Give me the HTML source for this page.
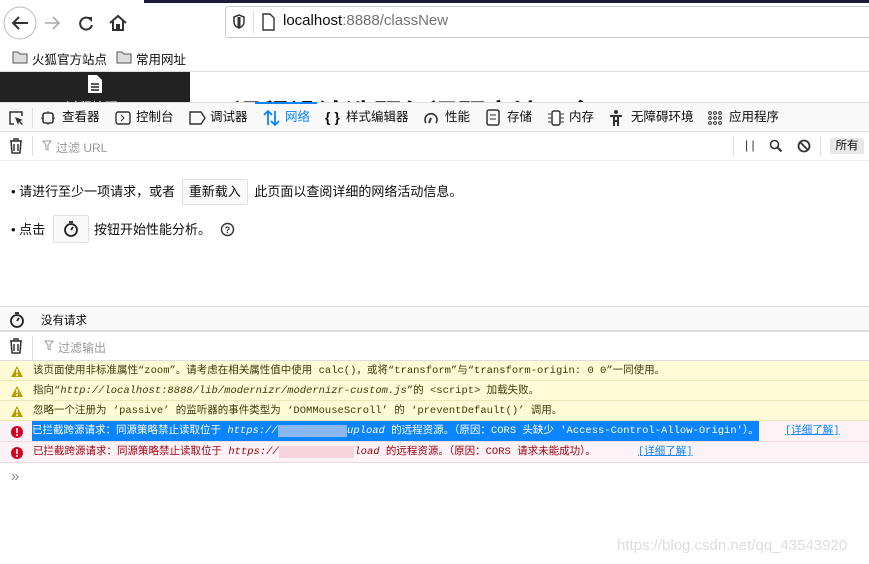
<!DOCTYPE html>
<html><head><meta charset="utf-8"><style>
*{margin:0;padding:0;box-sizing:border-box}
body{width:869px;height:564px;overflow:hidden;background:#fff;font-family:"Liberation Sans","Noto Sans CJK SC",sans-serif;font-size:12px;color:#0c0c0d;position:relative}
.abs{position:absolute}
.mono{font-family:"Liberation Mono","Noto Sans CJK SC",monospace;font-size:10.5px}
.row{position:absolute;left:0;width:869px;height:20px;line-height:20px;border-bottom:1px solid #ece6b8}
.warn{background:#fffbd6;color:#3b3b0a}
.err{background:#fdf2f5;color:#a4000f;border-bottom-color:#f2dae1}
.ico{position:absolute;left:11px;top:5px}
.txt{position:absolute;left:33px;top:0;white-space:nowrap}
.tab{position:absolute;top:0;height:29px;line-height:29px;font-size:12.5px;white-space:nowrap}
</style></head><body>
<div class="abs" style="left:144px;top:0;width:725px;height:3px;background:#1c1b3a"></div>
<svg class="abs" style="left:3px;top:6px" width="34" height="34"><circle cx="17" cy="17" r="16" fill="#fff" stroke="#bbb"/><path d="M25 17H10M16 11l-6 6 6 6" stroke="#333" stroke-width="2" fill="none"/></svg>
<svg class="abs" style="left:42px;top:13px" width="20" height="20"><path d="M17 10H3M11 4l6 6-6 6" stroke="#aaa" stroke-width="1.6" fill="none"/></svg>
<svg class="abs" style="left:76px;top:13px" width="20" height="20"><path d="M15 7A6 6 0 1 0 16 12" stroke="#333" stroke-width="2" fill="none"/><path d="M11 4h5v5z" fill="#333"/></svg>
<svg class="abs" style="left:108px;top:13px" width="20" height="20"><path d="M2 10L10 3l8 7M5 8v9h4v-5h2v5h4V8" stroke="#333" stroke-width="2" fill="none"/></svg>
<div class="abs" style="left:225px;top:6px;width:660px;height:32px;border:1px solid #ccc;border-radius:3px;background:#fff"></div>
<svg class="abs" style="left:232px;top:14px" width="14" height="16"><path d="M7 1L2 3v5c0 3 2 5 5 6 3-1 5-3 5-6V3z" stroke="#333" stroke-width="1.5" fill="none"/><path d="M7 3v10" stroke="#333" stroke-width="3"/></svg>
<div class="abs" style="left:253px;top:10px;width:1px;height:24px;background:#ddd"></div>
<svg class="abs" style="left:261px;top:13px" width="14" height="18"><path d="M2 1h7l4 4v12H2z" stroke="#333" stroke-width="1.4" fill="none"/></svg>
<div class="abs" style="left:283px;top:12px;font-size:15px;color:#0c0c0d">localhost<span style="color:#737373">:8888/classNew</span></div>
<svg class="abs" style="left:12px;top:51px" width="16" height="13"><path d="M1 1h5l2 2h7v9H1z" fill="#ddd" stroke="#555"/></svg>
<div class="abs" style="left:32px;top:49px;font-size:12.5px">火狐官方站点</div>
<svg class="abs" style="left:116px;top:51px" width="16" height="13"><path d="M1 1h5l2 2h7v9H1z" fill="#ddd" stroke="#555"/></svg>
<div class="abs" style="left:136px;top:49px;font-size:12.5px">常用网址</div>
<div class="abs" style="left:0;top:71px;width:869px;height:1px;background:#ddd"></div>
<div class="abs" style="left:0;top:72px;width:190px;height:30px;background:#222;overflow:hidden">
<svg class="abs" style="left:87px;top:2px" width="16" height="20"><path d="M1 1h9l5 5v13H1z" fill="#fff"/><path d="M4 10h8M4 13h8M4 16h8" stroke="#222" stroke-width="1.5"/></svg>
<div class="abs" style="left:66px;top:25px;color:#fff;font-size:13px">过程管理</div></div>
<div class="abs" style="left:233px;top:72px;width:380px;height:30px;overflow:hidden"><div style="position:absolute;top:21px;font-size:28px;font-weight:bold;white-space:nowrap">课程设计选题与问题交流平台</div></div>
<div class="abs" style="left:0;top:102px;width:869px;height:30px;background:#f9f9fa;border-top:1px solid #ddd;border-bottom:1px solid #ddd"></div>
<div class="abs" style="left:255px;top:102px;width:62px;height:2px;background:#0a84ff"></div>
<div class="abs" style="top:103px;left:0;width:869px;height:29px">
<svg class="abs" style="left:8px;top:7px" width="16" height="16"><path d="M6 14H2V2h12v4" stroke="#333" stroke-width="1.5" fill="none"/><path d="M7 7l8 3-3 1 3 3-1 1-3-3-1 3z" fill="#333"/></svg>
<div class="abs" style="left:32px;top:5px;width:1px;height:20px;background:#ddd"></div>
<svg class="abs" style="left:41px;top:8px" width="14" height="14"><rect x="2" y="2" width="10" height="10" rx="2" stroke="#333" stroke-width="1.6" fill="none"/><path d="M7 0v2M7 12v2M0 7h2M12 7h2" stroke="#333"/></svg>
<div class="tab" style="left:62px">查看器</div>
<svg class="abs" style="left:115px;top:8px" width="16" height="14"><rect x="1" y="1" width="14" height="12" rx="2" stroke="#333" stroke-width="1.4" fill="none"/><path d="M6 4l3 3-3 3" stroke="#333" fill="none"/></svg>
<div class="tab" style="left:136px">控制台</div>
<svg class="abs" style="left:189px;top:8px" width="17" height="14"><path d="M1 1h11l4 6-4 6H1z" stroke="#333" stroke-width="1.4" fill="none"/></svg>
<div class="tab" style="left:210px">调试器</div>
<svg class="abs" style="left:263px;top:6px" width="17" height="18"><path d="M5 16V2M1 6l4-4 4 4M12 2v14M8 12l4 4 4-4" stroke="#0a84ff" stroke-width="1.8" fill="none"/></svg>
<div class="tab" style="left:285px;color:#0a84ff">网络</div>
<div class="tab" style="left:325px;font-weight:bold;font-size:14px">{ }</div>
<div class="tab" style="left:346px">样式编辑器</div>
<svg class="abs" style="left:423px;top:7px" width="16" height="16"><path d="M3 13A6 6 0 1 1 13 13" stroke="#333" stroke-width="1.6" fill="none"/><path d="M8 8l-2 5" stroke="#333" stroke-width="2"/></svg>
<div class="tab" style="left:445px">性能</div>
<svg class="abs" style="left:486px;top:6px" width="14" height="17"><rect x="1" y="1" width="12" height="15" rx="2" stroke="#333" stroke-width="1.5" fill="none"/><path d="M4 6h6M4 10h6" stroke="#333"/></svg>
<div class="tab" style="left:507px">存储</div>
<svg class="abs" style="left:548px;top:7px" width="16" height="16"><rect x="4" y="1" width="8" height="14" rx="2" stroke="#333" stroke-width="1.5" fill="none"/><path d="M0 4h3M0 8h3M0 12h3M13 4h3M13 8h3M13 12h3" stroke="#333"/></svg>
<div class="tab" style="left:569px">内存</div>
<svg class="abs" style="left:609px;top:6px" width="14" height="18"><circle cx="7" cy="3" r="2" fill="#333"/><path d="M1 7h12M5 7v10M9 7v10M5 12h4" stroke="#333" stroke-width="2"/></svg>
<div class="tab" style="left:631px">无障碍环境</div>
<svg class="abs" style="left:708px;top:8px" width="14" height="14"><g fill="none" stroke="#333"><circle cx="2" cy="2" r="1.4"/><circle cx="7" cy="2" r="1.4"/><circle cx="12" cy="2" r="1.4"/><circle cx="2" cy="7" r="1.4"/><circle cx="7" cy="7" r="1.4"/><circle cx="12" cy="7" r="1.4"/><circle cx="2" cy="12" r="1.4"/><circle cx="7" cy="12" r="1.4"/><circle cx="12" cy="12" r="1.4"/></g></svg>
<div class="tab" style="left:729px">应用程序</div>
</div>
<svg class="abs" style="left:9px;top:138px" width="14" height="16"><path d="M1 3h12M5 3V1h4v2M2 3l1 12h8l1-12M5 6v7M9 6v7" stroke="#333" stroke-width="1.5" fill="none"/></svg>
<div class="abs" style="left:32px;top:136px;width:1px;height:20px;background:#ddd"></div>
<svg class="abs" style="left:42px;top:140px" width="10" height="11"><path d="M1 1h8L6 5v5L4 9V5z" stroke="#999" fill="none"/></svg>
<div class="abs" style="left:56px;top:139px;color:#999;font-size:12px">过滤 URL</div>
<div class="abs" style="left:733px;top:136px;width:1px;height:20px;background:#ddd"></div>
<div class="abs" style="left:745px;top:138px;font-size:12px;color:#333">| |</div>
<svg class="abs" style="left:769px;top:139px" width="14" height="14"><circle cx="5.5" cy="5.5" r="4" stroke="#333" stroke-width="1.6" fill="none"/><path d="M8.5 8.5l4 4" stroke="#333" stroke-width="2"/></svg>
<svg class="abs" style="left:797px;top:139px" width="14" height="14"><circle cx="7" cy="7" r="5.5" stroke="#333" stroke-width="1.8" fill="none"/><path d="M3 3l8 8" stroke="#333" stroke-width="1.8"/></svg>
<div class="abs" style="left:820px;top:136px;width:1px;height:20px;background:#ddd"></div>
<div class="abs" style="left:830px;top:138px;width:34px;height:16px;background:#e8e8e9;border-radius:2px;font-size:11.5px;text-align:center;line-height:16px">所有</div>
<div class="abs" style="left:0;top:160px;width:869px;height:1px;background:#eee"></div>
<div class="abs" style="left:11px;top:179px;font-size:13px;white-space:nowrap;line-height:18px">• 请进行至少一项请求，或者 <span style="display:inline-block;margin:0 3px;padding:3px 6px;background:#f9f9fa;border:1px solid #e0e0e1;border-radius:2px">重新载入</span> 此页面以查阅详细的网络活动信息。</div>
<div class="abs" style="left:11px;top:221px;font-size:13px;white-space:nowrap;line-height:18px">• 点击</div>
<div class="abs" style="left:53px;top:215px;width:36px;height:28px;background:#f9f9fa;border:1px solid #e0e0e1;border-radius:2px"></div>
<svg class="abs" style="left:63px;top:220px" width="16" height="18"><circle cx="8" cy="10" r="6" stroke="#222" stroke-width="1.8" fill="none"/><path d="M6 2h4M8 10l2-3" stroke="#222" stroke-width="1.8"/></svg>
<div class="abs" style="left:94px;top:221px;font-size:13px;white-space:nowrap;line-height:18px">按钮开始性能分析。</div>
<svg class="abs" style="left:220px;top:222px" width="15" height="15"><circle cx="7.5" cy="7.5" r="6" stroke="#333" stroke-width="1.4" fill="none"/><text x="7.5" y="11" font-size="9" text-anchor="middle" font-family="Liberation Sans" font-weight="bold" fill="#333">?</text></svg>
<div class="abs" style="left:0;top:306px;width:869px;height:26px;background:#f9f9fa;border-top:1px solid #ddd;border-bottom:2px solid #ddd"></div>
<svg class="abs" style="left:9px;top:311px" width="16" height="18"><circle cx="8" cy="10" r="6" stroke="#222" stroke-width="1.8" fill="none"/><path d="M6 2h4M8 10l2-3" stroke="#222" stroke-width="1.8"/></svg>
<div class="abs" style="left:41px;top:312px;font-size:11.5px">没有请求</div>
<svg class="abs" style="left:9px;top:338px" width="14" height="16"><path d="M1 3h12M5 3V1h4v2M2 3l1 12h8l1-12M5 6v7M9 6v7" stroke="#333" stroke-width="1.5" fill="none"/></svg>
<div class="abs" style="left:32px;top:336px;width:1px;height:24px;background:#ddd"></div>
<svg class="abs" style="left:44px;top:340px" width="10" height="11"><path d="M1 1h8L6 5v5L4 9V5z" stroke="#999" fill="none"/></svg>
<div class="abs" style="left:58px;top:339px;color:#999;font-size:12px">过滤输出</div>
<div class="abs" style="left:0;top:360px;width:869px;height:1px;background:#ddd"></div>
<div class="row warn mono" style="top:361px"><svg class="ico" width="12" height="11"><path d="M6 0L12 11H0z" fill="#b5a000"/><path d="M6 3v4M6 8v2" stroke="#fff" stroke-width="1.4"/></svg><span class="txt">该页面使用非标准属性“zoom”。请考虑在相关属性值中使用 calc()，或将“transform”与“transform-origin: 0 0”一同使用。</span></div>
<div class="row warn mono" style="top:381px"><svg class="ico" width="12" height="11"><path d="M6 0L12 11H0z" fill="#b5a000"/><path d="M6 3v4M6 8v2" stroke="#fff" stroke-width="1.4"/></svg><span class="txt">指向“<i>http://localhost:8888/lib/modernizr/modernizr-custom.js</i>”的 &lt;script&gt; 加载失败。</span></div>
<div class="row warn mono" style="top:401px"><svg class="ico" width="12" height="11"><path d="M6 0L12 11H0z" fill="#b5a000"/><path d="M6 3v4M6 8v2" stroke="#fff" stroke-width="1.4"/></svg><span class="txt">忽略一个注册为 ‘passive’ 的监听器的事件类型为 ‘DOMMouseScroll’ 的 ‘preventDefault()’ 调用。</span></div>
<div class="row err mono" style="top:421px;height:21px"><svg class="ico" width="12" height="12"><circle cx="6" cy="6" r="6" fill="#d70022"/><path d="M6 2v5M6 8v2" stroke="#fff" stroke-width="1.6"/></svg><span class="txt" style="background:#0a84ff;color:#fff;left:32px">已拦截跨源请求：同源策略禁止读取位于 <i>https://<span style="color:#8ab8f4;background:#8ab8f4">xxxxxxxxxxx</span>upload</i> 的远程资源。（原因：CORS 头缺少 'Access-Control-Allow-Origin'）。</span><span class="abs" style="left:785px;color:#0a84ff;text-decoration:underline">[详细了解]</span></div>
<div class="row err mono" style="top:442px;height:21px"><svg class="ico" width="12" height="12"><circle cx="6" cy="6" r="6" fill="#d70022"/><path d="M6 2v5M6 8v2" stroke="#fff" stroke-width="1.6"/></svg><span class="txt">已拦截跨源请求：同源策略禁止读取位于 <i>https://<span style="color:#f5d3dc;background:#f5d3dc">xxxxxxxxxxxx</span>load</i> 的远程资源。（原因：CORS 请求未能成功）。</span><span class="abs" style="left:638px;color:#0a84ff;text-decoration:underline">[详细了解]</span></div>
<div class="abs" style="left:11px;top:468px;color:#888;font-size:15px">»</div>
<div class="abs" style="left:617px;top:537px;color:#ddd;font-size:15px">https://blog.csdn.net/qq_43543920</div>
</body></html>
